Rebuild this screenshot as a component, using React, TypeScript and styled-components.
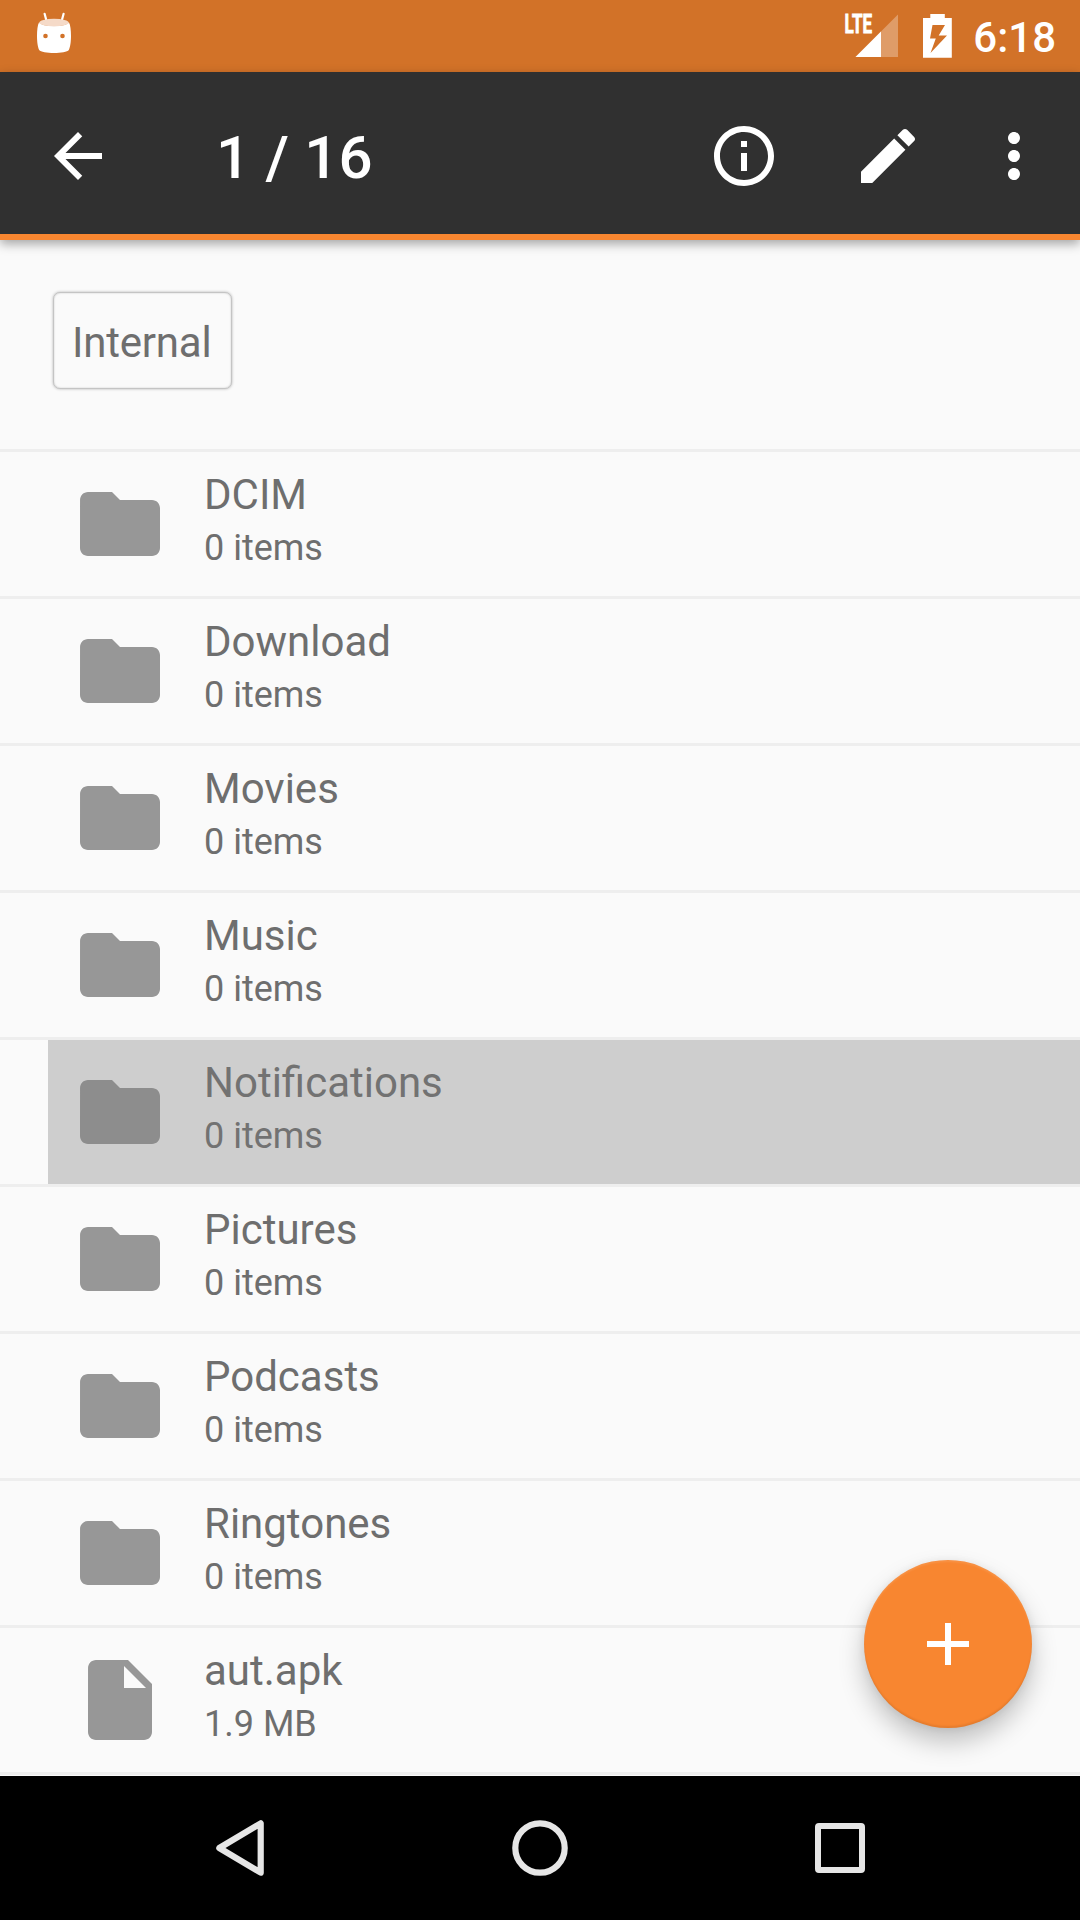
import React from 'react';
import styled, { createGlobalStyle } from 'styled-components';

const GlobalStyle = createGlobalStyle`
  * { box-sizing: border-box; }
  body {
    margin: 0;
    font-family: Roboto, 'Noto Sans', sans-serif;
    background: #fafafa;
  }
  svg { display: block; flex: none; }
`;

const Screen = styled.div`
  position: relative;
  display: flex;
  flex-direction: column;
  width: 1080px;
  height: 1920px;
  overflow: hidden;
  background: #fafafa;
`;

const StatusBar = styled.header`
  display: flex;
  align-items: center;
  flex: none;
  height: 72px;
  padding: 0 24px 0 36px;
  background: #d27228;
`;

const StatusIcons = styled.div`
  display: flex;
  align-items: center;
  margin-left: auto;
`;

const Clock = styled.span`
  margin-left: 20px;
  padding-top: 4px;
  font-size: 42px;
  font-weight: 500;
  line-height: 50px;
  color: #fff;
`;

const Toolbar = styled.nav`
  display: flex;
  align-items: center;
  flex: none;
  z-index: 1;
  height: 168px;
  padding: 6px 12px 0 42px;
  background: #303030;
  border-bottom: 6px solid #f88630;
  box-shadow: 0 4px 10px rgba(0, 0, 0, 0.34);
`;

const IconButton = styled.button<{ $width?: number }>`
  display: flex;
  align-items: center;
  justify-content: center;
  width: ${({ $width = 72 }) => $width}px;
  height: 72px;
  padding: 0;
  border: 0;
  background: none;
  color: #fff;
`;

const Title = styled.h1`
  flex: 1;
  margin: 0 0 0 102px;
  padding-top: 4px;
  font-size: 60px;
  font-weight: 500;
  line-height: 70px;
  letter-spacing: 0.2px;
  color: #fff;
`;

const Breadcrumbs = styled.div`
  display: flex;
  align-items: flex-start;
  flex: none;
  height: 209px;
  padding: 52px 53px 0;
`;

const Crumb = styled.button`
  width: 179px;
  height: 97px;
  padding: 4px 0 0 18px;
  border: 1px solid #c4c4c4;
  border-radius: 7px;
  background: #fafafa;
  box-shadow: 0 0 3px rgba(0, 0, 0, 0.28), inset 0 0 2px rgba(0, 0, 0, 0.2);
  font: 400 42px/50px Roboto, sans-serif;
  letter-spacing: -0.2px;
  text-align: left;
  color: #6e6e6e;
`;

const FileList = styled.ul`
  flex: 1;
  margin: 0;
  padding: 0;
  list-style: none;
  border-top: 3px solid #eeeeee;
`;

const FileItem = styled.li`
  height: 147px;
  padding-left: 48px;
  border-bottom: 3px solid #eeeeee;
`;

const FileRow = styled.div<{ $selected: boolean }>`
  display: flex;
  align-items: center;
  gap: 36px;
  height: 144px;
  padding-left: 24px;
  background: ${({ $selected }) => ($selected ? '#cecece' : 'transparent')};
  color: ${({ $selected }) => ($selected ? '#727272' : '#6e6e6e')};

  svg { color: ${({ $selected }) => ($selected ? '#8d8d8d' : '#979797')}; }
`;

const FileText = styled.div`
  display: flex;
  flex-direction: column;
  align-self: flex-start;
  padding-top: 18px;
`;

const FileName = styled.span`
  font-size: 42px;
  line-height: 50px;
`;

const FileMeta = styled.span`
  margin-top: 7px;
  font-size: 36px;
  line-height: 42px;
`;

const Fab = styled.button`
  position: absolute;
  right: 48px;
  bottom: 192px;
  display: flex;
  align-items: center;
  justify-content: center;
  width: 168px;
  height: 168px;
  padding: 0;
  border: 0;
  border-radius: 50%;
  background: #f88630;
  color: #fff;
  box-shadow: 0 14px 26px rgba(0, 0, 0, 0.23), 0 1px 8px rgba(0, 0, 0, 0.07),
    inset 0 -2px 2px rgba(0, 0, 0, 0.08), inset 0 2px 2px rgba(255, 255, 255, 0.1);
`;

const NavBar = styled.footer`
  display: flex;
  flex: none;
  height: 144px;
  padding: 0 90px;
  background: #000;
`;

const NavButton = styled.button`
  display: flex;
  align-items: center;
  justify-content: center;
  flex: 1;
  padding: 0;
  border: 0;
  background: none;
  color: #e6e6e6;
`;

const paths = {
  back: 'M20 11H7.83l5.59-5.59L12 4l-8 8 8 8 1.41-1.41L7.83 13H20v-2z',
  info: 'M11 17h2v-6h-2v6zm1-15C6.48 2 2 6.48 2 12s4.48 10 10 10 10-4.48 10-10S17.52 2 12 2zm0 18c-4.41 0-8-3.59-8-8s3.59-8 8-8 8 3.59 8 8-3.59 8-8 8zM11 9h2V7h-2v2z',
  edit: 'M3 17.25V21h3.75L17.81 9.94l-3.75-3.75L3 17.25zM20.71 7.04c.39-.39.39-1.02 0-1.41l-2.34-2.34c-.39-.39-1.02-.39-1.41 0l-1.83 1.83 3.75 3.75 1.83-1.83z',
  more: 'M12 8c1.1 0 2-.9 2-2s-.9-2-2-2-2 .9-2 2 .9 2 2 2zm0 2c-1.1 0-2 .9-2 2s.9 2 2 2 2-.9 2-2-.9-2-2-2zm0 6c-1.1 0-2 .9-2 2s.9 2 2 2 2-.9 2-2-.9-2-2-2z',
  folder: 'M10 4H4c-1.1 0-1.99.9-1.99 2L2 18c0 1.1.9 2 2 2h16c1.1 0 2-.9 2-2V8c0-1.1-.9-2-2-2h-8l-2-2z',
  file: 'M6 2c-1.1 0-1.99.9-1.99 2L4 20c0 1.1.89 2 1.99 2H18c1.1 0 2-.9 2-2V8l-6-6H6zm7 7V3.5L18.5 9H13z',
  add: 'M19 13h-6v6h-2v-6H5v-2h6V5h2v6h6v2z',
};

const Icon = ({ name, size = 72 }: { name: keyof typeof paths; size?: number }) => (
  <svg width={size} height={size} viewBox="0 0 24 24" fill="currentColor">
    <path d={paths[name]} />
  </svg>
);

const DroidIcon = () => (
  <svg width="36" height="72" viewBox="36 0 36 72">
    <path d="M44.6 13.8l2 7.4M63.6 13.8l-2 7.4" stroke="#fff" strokeWidth="2.2" strokeLinecap="round" />
    <path
      d="M39 22.5C37.6 25 37 30 37 36s.8 11.500 2.200 14c1.300 2 8 3 14.800 3s13.500-1 14.800-3C70.200 47.500 71 42 71 36s-.6-11-2-13.500C67 25 61 26 54 26s-13-1-15-3.500z"
      fill="#fff"
    />
    <ellipse cx="54" cy="22.600" rx="14.800" ry="3.800" fill="#f5dac8" />
    <circle cx="45.500" cy="36" r="2.300" fill="#d27228" />
    <circle cx="62.500" cy="36" r="2.300" fill="#d27228" />
  </svg>
);

const SignalIcon = () => (
  <svg width="56" height="72" viewBox="844 0 56 72">
    <path d="M898 14.500V57h-42.500z" fill="#fff" fillOpacity=".3" />
    <path d="M881 31.500V57h-25.500z" fill="#fff" />
    <text
      x="844.600"
      y="33.400"
      fill="#fff"
      stroke="#fff"
      strokeWidth=".8"
      fontFamily="Roboto, sans-serif"
      fontSize="25.500"
      fontWeight="700"
      textLength="27.500"
      lengthAdjust="spacingAndGlyphs"
    >
      LTE
    </text>
  </svg>
);

const BatteryBox = styled.svg`
  margin-left: 23px;
`;

const BatteryIcon = () => (
  <BatteryBox width="30" height="72" viewBox="923 0 30 72">
    <path
      d="M930.300 14h14.500v4h7v39.800H923V18h7.300zM932.500 25l-2.500 13.500h5.800L930.500 53 947 35.500h-8.300L945 25z"
      fill="#fff"
      fillRule="evenodd"
    />
  </BatteryBox>
);

const files: { name: string; meta: string; kind: 'folder' | 'file'; selected?: boolean }[] = [
  { name: 'DCIM', meta: '0 items', kind: 'folder' },
  { name: 'Download', meta: '0 items', kind: 'folder' },
  { name: 'Movies', meta: '0 items', kind: 'folder' },
  { name: 'Music', meta: '0 items', kind: 'folder' },
  { name: 'Notifications', meta: '0 items', kind: 'folder', selected: true },
  { name: 'Pictures', meta: '0 items', kind: 'folder' },
  { name: 'Podcasts', meta: '0 items', kind: 'folder' },
  { name: 'Ringtones', meta: '0 items', kind: 'folder' },
  { name: 'aut.apk', meta: '1.9 MB', kind: 'file' },
];

export default function App() {
  return (
    <Screen>
      <GlobalStyle />
      <StatusBar>
        <DroidIcon />
        <StatusIcons>
          <SignalIcon />
          <BatteryIcon />
          <Clock>6:18</Clock>
        </StatusIcons>
      </StatusBar>
      <Toolbar>
        <IconButton><Icon name="back" /></IconButton>
        <Title>1 / 16</Title>
        <IconButton $width={144}><Icon name="info" /></IconButton>
        <IconButton $width={144}><Icon name="edit" /></IconButton>
        <IconButton $width={108}><Icon name="more" /></IconButton>
      </Toolbar>
      <Breadcrumbs>
        <Crumb>Internal</Crumb>
      </Breadcrumbs>
      <FileList>
        {files.map((file) => (
          <FileItem key={file.name}>
            <FileRow $selected={Boolean(file.selected)}>
              <Icon name={file.kind} size={96} />
              <FileText>
                <FileName>{file.name}</FileName>
                <FileMeta>{file.meta}</FileMeta>
              </FileText>
            </FileRow>
          </FileItem>
        ))}
      </FileList>
      <Fab><Icon name="add" /></Fab>
      <NavBar>
        <NavButton>
          <svg width="60" height="60" viewBox="210 1818 60 60" fill="none" stroke="currentColor">
            <path d="M260.700 1823.300v49.400L219.300 1848z" strokeWidth="6.200" strokeLinejoin="round" />
          </svg>
        </NavButton>
        <NavButton>
          <svg width="60" height="60" viewBox="0 0 60 60" fill="none" stroke="currentColor">
            <circle cx="30" cy="30" r="24.700" strokeWidth="6.200" />
          </svg>
        </NavButton>
        <NavButton>
          <svg width="60" height="60" viewBox="0 0 60 60" fill="currentColor">
            <path d="M9 5h42a4 4 0 0 1 4 4v42a4 4 0 0 1-4 4H9a4 4 0 0 1-4-4V9a4 4 0 0 1 4-4zM11 11v38h38V11z" fillRule="evenodd" />
          </svg>
        </NavButton>
      </NavBar>
    </Screen>
  );
}
